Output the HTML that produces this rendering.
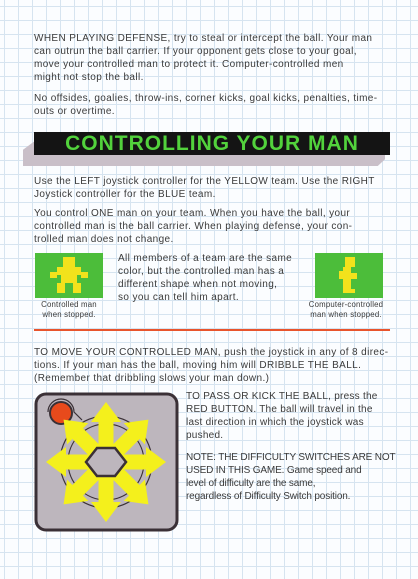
<!DOCTYPE html><html><head><style>
body{margin:0;width:418px;height:579px;overflow:hidden;position:relative;font-family:"Liberation Sans",sans-serif;color:#3a3a3a;
background-color:#fbfdff;background-image:linear-gradient(#d6e4f0 1px,transparent 1px),linear-gradient(90deg,#d6e4f0 1px,transparent 1px);background-size:14px 14px;background-position:4px 6px;}
.t{position:absolute;font-size:10px;letter-spacing:0.38px;line-height:13px;white-space:nowrap;}
.c{position:absolute;font-size:7.8px;letter-spacing:0.2px;line-height:10px;text-align:center;white-space:nowrap;}
</style></head><body>
<div class="t" style="left:34px;top:32px">WHEN PLAYING DEFENSE, try to steal or intercept the ball. Your man<br>can outrun the ball carrier. If your opponent gets close to your goal,<br>move your controlled man to protect it. Computer-controlled men<br>might not stop the ball.</div>
<div class="t" style="left:34px;top:92px">No offsides, goalies, throw-ins, corner kicks, goal kicks, penalties, time-<br>outs or overtime.</div>
<div style="position:absolute;left:23px;top:139px;width:362px;height:27px;background:#c9bfc8;clip-path:polygon(4% 0,100% 0,100% 75%,98% 100%,0 100%,0 40%)"></div>
<div style="position:absolute;left:34px;top:132px;width:356px;height:23px;background:#141414;color:#52d23c;font-weight:bold;font-size:21px;line-height:23px;text-align:center;letter-spacing:1px">CONTROLLING YOUR MAN</div>
<div class="t" style="left:34px;top:175px">Use the LEFT joystick controller for the YELLOW team. Use the RIGHT<br>Joystick controller for the BLUE team.</div>
<div class="t" style="left:34px;top:207px">You control ONE man on your team. When you have the ball, your<br>controlled man is the ball carrier. When playing defense, your con-<br>trolled man does not change.</div>
<div style="position:absolute;left:35px;top:253px;width:68px;height:45px;background:#4cbd3a"></div>
<svg style="position:absolute;left:35px;top:253px" width="68" height="45" fill="#f2e21c"><rect x="28" y="4" width="12" height="10"/><rect x="22" y="14" width="24" height="8"/><rect x="15" y="19" width="7" height="6"/><rect x="46" y="19" width="7" height="6"/><rect x="26" y="22" width="16" height="8"/><rect x="22" y="30" width="8" height="10"/><rect x="38" y="30" width="8" height="10"/></svg>
<div style="position:absolute;left:315px;top:253px;width:68px;height:45px;background:#4cbd3a"></div>
<svg style="position:absolute;left:315px;top:253px" width="68" height="45" fill="#f2e21c"><rect x="30" y="4" width="10" height="10"/><rect x="28" y="14" width="8" height="14"/><rect x="24" y="18" width="6" height="8"/><rect x="36" y="20" width="6" height="6"/><rect x="28" y="28" width="8" height="12"/><rect x="34" y="36" width="6" height="4"/></svg>
<div class="t" style="left:118px;top:252px">All members of a team are the same<br>color, but the controlled man has a<br>different shape when not moving,<br>so you can tell him apart.</div>
<div class="c" style="left:30px;top:300px;width:78px">Controlled man<br>when stopped.</div>
<div class="c" style="left:300px;top:300px;width:92px">Computer-controlled<br>man when stopped.</div>
<div style="position:absolute;left:34px;top:329px;width:356px;height:2px;background:#e8542c"></div>
<div class="t" style="left:34px;top:346px">TO MOVE YOUR CONTROLLED MAN, push the joystick in any of 8 direc-<br>tions. If your man has the ball, moving him will DRIBBLE THE BALL.<br>(Remember that dribbling slows your man down.)</div>
<svg style="position:absolute;left:34px;top:392px" width="146" height="140">
<rect x="2" y="2" width="141" height="136" rx="10" fill="#bdb6bd" stroke="#3a3036" stroke-width="3"/>
<circle cx="72" cy="70" r="46" fill="none" stroke="#3a3036" stroke-width="1.2"/>
<circle cx="72" cy="70" r="38" fill="none" stroke="#3a3036" stroke-width="1.2"/>
<path d="M14 20 a13 13 0 0 1 26 0 l8 8" fill="none" stroke="#3a3036" stroke-width="1.2"/>
<circle cx="27" cy="21" r="11" fill="#e84a1c" stroke="#3a3036" stroke-width="2"/>
<g fill="#f4f01c" transform="translate(72,70)">
<g id="a"><path d="M-7.5 -12 L-7.5 -40 L-15 -40 L0 -60 L15 -40 L7.5 -40 L7.5 -12Z"/></g>
<use href="#a" transform="rotate(45)"/><use href="#a" transform="rotate(90)"/><use href="#a" transform="rotate(135)"/><use href="#a" transform="rotate(180)"/><use href="#a" transform="rotate(225)"/><use href="#a" transform="rotate(270)"/><use href="#a" transform="rotate(315)"/>
</g>
<path d="M63 56 L81 56 L92 70 L81 84 L63 84 L52 70Z" fill="#bdb6bd" stroke="#3a3036" stroke-width="2.5"/>
</svg>
<div class="t" style="left:186px;top:390px;letter-spacing:0.25px">TO PASS OR KICK THE BALL, press the<br>RED BUTTON. The ball will travel in the<br>last direction in which the joystick was<br>pushed.</div>
<div class="t" style="left:186px;top:451px;letter-spacing:-0.15px">NOTE: THE DIFFICULTY SWITCHES ARE NOT<br>USED IN THIS GAME. Game speed and<br>level of difficulty are the same,<br>regardless of Difficulty Switch position.</div>
</body></html>
